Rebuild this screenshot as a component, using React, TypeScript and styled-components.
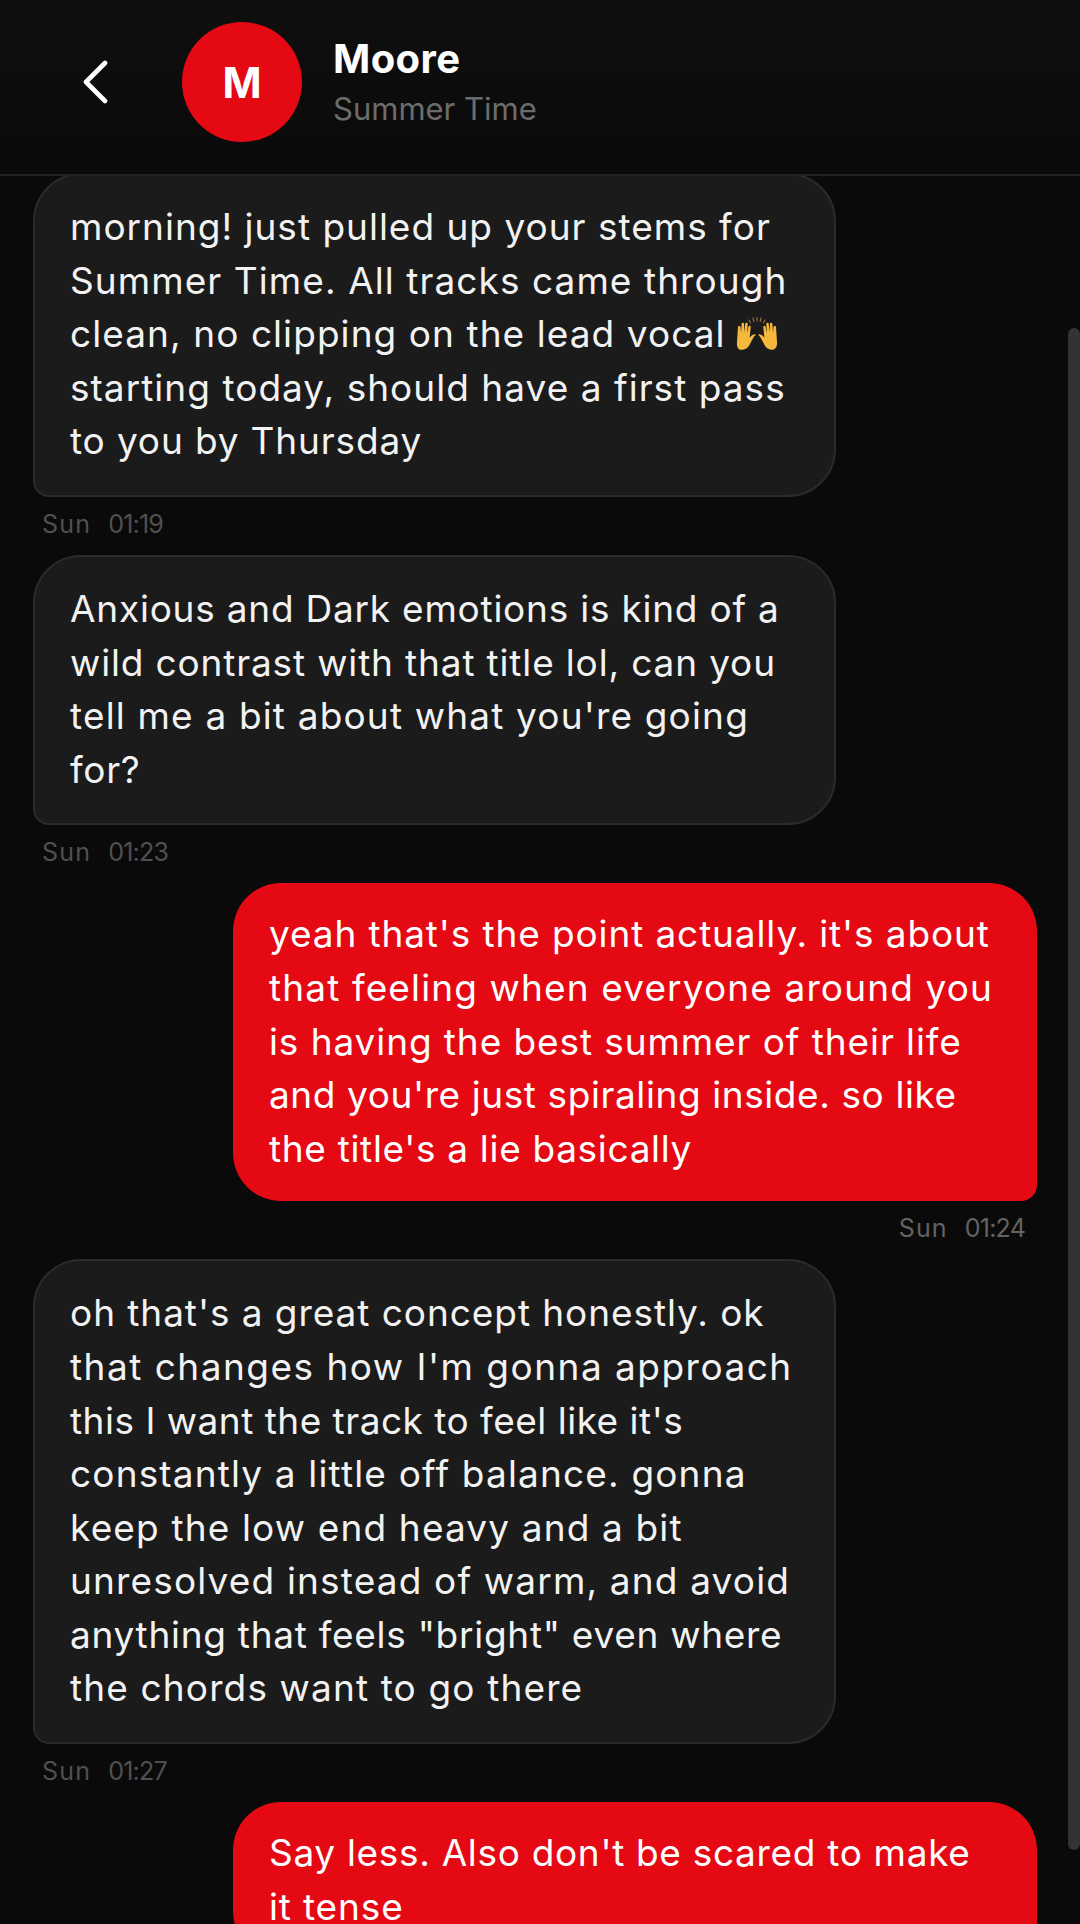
import * as React from "react";
import styled, { createGlobalStyle } from "styled-components";

const GlobalStyle = createGlobalStyle`
  html, body {
    margin: 0;
    padding: 0;
    background: #0a0a0a;
  }
  * {
    box-sizing: border-box;
  }
`;

const Page = styled.div`
  position: relative;
  width: 1080px;
  height: 1924px;
  overflow: hidden;
  background: #0a0a0a;
  font-family: "Inter", "Liberation Sans", sans-serif;
  color: #f4f4f4;
`;

const Header = styled.header`
  position: relative;
  z-index: 1;
  display: flex;
  align-items: center;
  height: 176px;
  padding: 0 0 10px 82px;
  background: linear-gradient(#0f0f0f, #0a0a0a);
  border-bottom: 2px solid #222;
`;

const BackButton = styled.div`
  display: flex;
  width: 26px;
  margin-right: 74px;
`;

const Avatar = styled.div`
  display: flex;
  align-items: center;
  justify-content: center;
  width: 120px;
  height: 120px;
  border-radius: 50%;
  background: #e50914;
  color: #fff;
  font-size: 42px;
  font-weight: 700;
`;

const Titles = styled.div`
  margin-left: 31px;
  display: flex;
  flex-direction: column;
`;

const Name = styled.div`
  font-size: 40px;
  line-height: 46px;
  font-weight: 700;
  letter-spacing: 0.4px;
  color: #fff;
`;

const Subtitle = styled.div`
  font-size: 31px;
  line-height: 38px;
  margin-top: 8px;
  color: #6c6c6c;
`;

const List = styled.div`
  display: flex;
  flex-direction: column;
  margin-top: -3px;
  padding: 0 43px 0 33px;
`;

const Row = styled.div<{ $mine: boolean }>`
  display: flex;
  flex-direction: column;
  align-items: ${(p) => (p.$mine ? "flex-end" : "flex-start")};
`;

const Bubble = styled.div<{ $mine: boolean }>`
  width: ${(p) => (p.$mine ? "804px" : "803px")};
  padding: ${(p) => (p.$mine ? "24px 36px 26px" : "25px 35px 27px")};
  font-size: 37px;
  line-height: 53.6px;
  background: ${(p) => (p.$mine ? "#e50914" : "#1b1b1b")};
  border: ${(p) => (p.$mine ? "0" : "2px solid #2b2b2b")};
  border-radius: ${(p) => (p.$mine ? "48px 48px 16px 48px" : "48px 48px 48px 16px")};
  color: ${(p) => (p.$mine ? "#fff" : "#f2f2f2")};
`;

const Line = styled.div<{ $spacing: number }>`
  display: flex;
  align-items: center;
  white-space: pre;
  letter-spacing: ${(p) => p.$spacing}px;
`;

const Meta = styled.div<{ $mine: boolean }>`
  display: flex;
  gap: 17px;
  height: 36px;
  margin: 9px 0 13px;
  padding: ${(p) => (p.$mine ? "0 12px 0 0" : "0 0 0 9px")};
  align-items: center;
  font-size: 25px;
  color: ${(p) => (p.$mine ? "#636363" : "#505050")};
`;

const Day = styled.span`
  letter-spacing: 1.2px;
`;

const Time = styled.span`
  letter-spacing: -0.8px;
`;

const ScrollThumb = styled.div`
  position: absolute;
  z-index: 2;
  top: 328px;
  right: 0;
  width: 12px;
  height: 1522px;
  border-radius: 6px;
  background: #333;
`;

const RaisedHands = () => (
  <svg width="46" height="36" viewBox="0 0 46 36" style={{ marginLeft: 8 }}>
    <g stroke="#b5803a" strokeWidth="1" strokeLinecap="round">
      <path d="M15 4l1.5 3M19 2l.8 3.5M23 1.5v3.5M27 2l-.8 3.5M31 4l-1.5 3" />
    </g>
    <g fill="#f5b83d">
      <path d="M4 11c0-1.4 2.300-1.400 2.500 0l.5 6 .6-9c.1-1.600 2.500-1.500 2.500 0l.2 8.500 1-8.800c.2-1.500 2.500-1.300 2.400.2l-.6 9.600 1.400-7c.3-1.400 2.400-1 2.200.5l-1 10.500c3-3.500 4.800-3.600 6-2.800-2.800 2.500-4.300 7-6.500 10.800-2 3.200-4.800 4.500-8 4.300C4 33.800 2.500 30 3 26z" />
      <path d="M42 11c0-1.400-2.300-1.400-2.500 0l-.5 6-.6-9c-.1-1.600-2.500-1.500-2.500 0l-.2 8.500-1-8.800c-.2-1.500-2.500-1.300-2.400.2l.6 9.600-1.400-7c-.3-1.400-2.400-1-2.200.5l1 10.500c-3-3.500-4.800-3.600-6-2.800 2.800 2.500 4.300 7 6.500 10.800 2 3.200 4.800 4.500 8 4.300 3.200-.5 4.700-4.300 4.200-8.300z" />
    </g>
  </svg>
);

type Message = {
  mine: boolean;
  // text of the line and the letter spacing that keeps it at its width
  lines: [string, number][];
  time?: string;
  emojiOnLine?: number;
};

const messages: Message[] = [
  {
    mine: false,
    lines: [
      ["morning! just pulled up your stems for", 1],
      ["Summer Time. All tracks came through", 1.07],
      ["clean, no clipping on the lead vocal", 1.07],
      ["starting today, should have a first pass", 1.03],
      ["to you by Thursday", 0.86],
    ],
    time: "01:19",
    emojiOnLine: 2,
  },
  {
    mine: false,
    lines: [
      ["Anxious and Dark emotions is kind of a", 0.77],
      ["wild contrast with that title lol, can you", 0.85],
      ["tell me a bit about what you're going", 1.17],
      ["for?", 0.7],
    ],
    time: "01:23",
  },
  {
    mine: true,
    lines: [
      ["yeah that's the point actually. it's about", 0.88],
      ["that feeling when everyone around you", 1.13],
      ["is having the best summer of their life", 0.91],
      ["and you're just spiraling inside. so like", 0.59],
      ["the title's a lie basically", 0.68],
    ],
    time: "01:24",
  },
  {
    mine: false,
    lines: [
      ["oh that's a great concept honestly. ok", 0.94],
      ["that changes how I'm gonna approach", 1.49],
      ["this I want the track to feel like it's", 0.5],
      ["constantly a little off balance. gonna", 1.16],
      ["keep the low end heavy and a bit", 1.15],
      ["unresolved instead of warm, and avoid", 1.16],
      ["anything that feels \"bright\" even where", 0.72],
      ["the chords want to go there", 1.14],
    ],
    time: "01:27",
  },
  {
    mine: true,
    lines: [
      ["Say less. Also don't be scared to make", 0.68],
      ["it tense", 0.85],
    ],
  },
];

export default function App() {
  return (
    <Page>
      <GlobalStyle />
      <Header>
        <BackButton>
          <svg width="26" height="44" viewBox="0 0 26 44" fill="none">
            <path d="M23 3 L4 22 L23 41" stroke="#fff" strokeWidth="4.6" strokeLinecap="round" strokeLinejoin="round" />
          </svg>
        </BackButton>
        <Avatar>M</Avatar>
        <Titles>
          <Name>Moore</Name>
          <Subtitle>Summer Time</Subtitle>
        </Titles>
      </Header>
      <List>
        {messages.map((m, i) => (
          <Row key={i} $mine={m.mine}>
            <Bubble $mine={m.mine}>
              {m.lines.map(([text, spacing], j) => (
                <Line key={j} $spacing={spacing}>
                  {text}
                  {m.emojiOnLine === j && <RaisedHands />}
                </Line>
              ))}
            </Bubble>
            {m.time && (
              <Meta $mine={m.mine}>
                <Day>Sun</Day>
                <Time>{m.time}</Time>
              </Meta>
            )}
          </Row>
        ))}
      </List>
      <ScrollThumb />
    </Page>
  );
}
